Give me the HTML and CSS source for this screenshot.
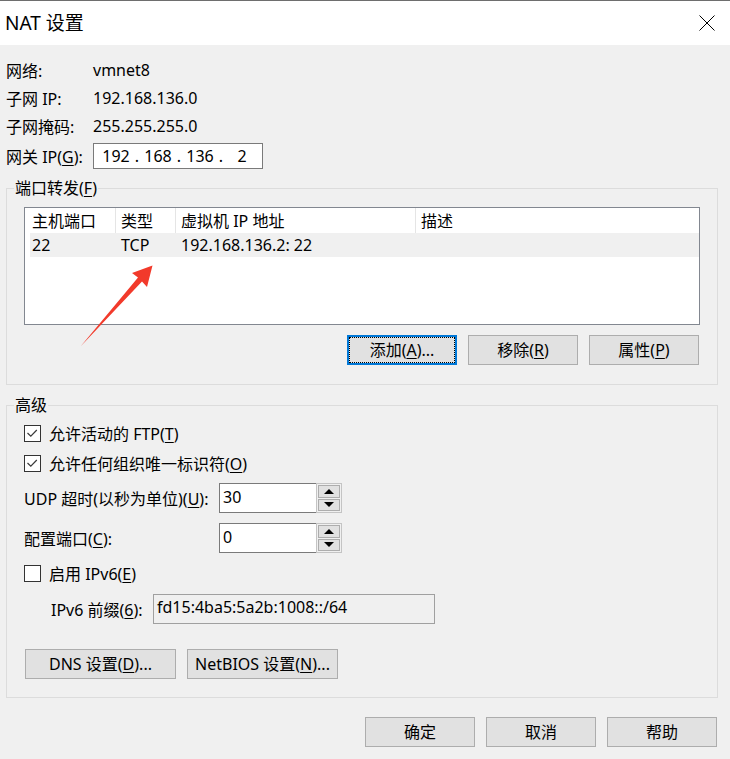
FILE: index.html
```html
<!DOCTYPE html>
<html lang="zh-CN">
<head>
<meta charset="utf-8">
<title>NAT 设置</title>
<link rel="stylesheet" href="styles.css">
</head>
<body>
<div class="window">
  <header class="titlebar">
    <span class="title">NAT 设置</span>
    <span class="close">
      <svg width="16" height="16" viewBox="0 0 16 16"><path d="M0.5 0.5 L15.5 15.5 M15.5 0.5 L0.5 15.5" stroke="#000" stroke-width="1" fill="none"/></svg>
    </span>
  </header>

  <main class="content">
    <div class="info">
      <span>网络:</span><span>vmnet8</span>
      <span>子网 IP:</span><span>192.168.136.0</span>
      <span>子网掩码:</span><span>255.255.255.0</span>
      <span>网关 IP(<u>G</u>):</span>
      <div class="ipbox">
        <span class="seg">192</span><span class="dot">.</span>
        <span class="seg">168</span><span class="dot">.</span>
        <span class="seg">136</span><span class="dot">.</span>
        <span class="seg">2</span>
      </div>
    </div>

    <fieldset class="group">
      <legend>端口转发(<u>F</u>)</legend>
      <div class="group-body ports-body">
        <div class="list">
          <div class="list-head">
            <span class="col">主机端口</span>
            <span class="col sep">类型</span>
            <span class="col sep">虚拟机 IP 地址</span>
            <span class="col sep">描述</span>
          </div>
          <div class="list-row">
            <span class="col first">22</span>
            <span class="col">TCP</span>
            <span class="col">192.168.136.2: 22</span>
            <span class="col"></span>
          </div>
        </div>
        <div class="btnrow">
          <button class="btn default">添加(<u>A</u>)...</button>
          <button class="btn">移除(<u>R</u>)</button>
          <button class="btn">属性(<u>P</u>)</button>
        </div>
      </div>
    </fieldset>

    <fieldset class="group group-adv">
      <legend>高级</legend>
      <div class="group-body adv-body">
        <label class="check">
          <span class="box"><svg width="15" height="15" viewBox="0 0 15 15"><polyline points="2.5,7 5.8,10.2 11.8,4" fill="none" stroke="#3a3a3a" stroke-width="1.2"/></svg></span>
          <span>允许活动的 FTP(<u>T</u>)</span>
        </label>
        <label class="check">
          <span class="box"><svg width="15" height="15" viewBox="0 0 15 15"><polyline points="2.5,7 5.8,10.2 11.8,4" fill="none" stroke="#3a3a3a" stroke-width="1.2"/></svg></span>
          <span>允许任何组织唯一标识符(<u>O</u>)</span>
        </label>

        <div class="field udp">
          <span>UDP 超时(以秒为单位)(<u>U</u>):</span>
          <div class="spin">
            <span class="spin-input">30</span>
            <span class="spin-btns">
              <span class="spin-btn"><span class="tri up"></span></span>
              <span class="spin-btn"><span class="tri down"></span></span>
            </span>
          </div>
        </div>

        <div class="field port">
          <span>配置端口(<u>C</u>):</span>
          <div class="spin">
            <span class="spin-input">0</span>
            <span class="spin-btns">
              <span class="spin-btn"><span class="tri up"></span></span>
              <span class="spin-btn"><span class="tri down"></span></span>
            </span>
          </div>
        </div>

        <label class="check ipv6-check">
          <span class="box"></span>
          <span>启用 IPv6(<u>E</u>)</span>
        </label>

        <div class="prefix">
          <span>IPv6 前缀(<u>6</u>):</span>
          <span class="prefix-input">fd15:4ba5:5a2b:1008::/64</span>
        </div>

        <div class="dnsrow">
          <button class="btn wide">DNS 设置(<u>D</u>)...</button>
          <button class="btn wide">NetBIOS 设置(<u>N</u>)...</button>
        </div>
      </div>
    </fieldset>

    <div class="footer">
      <button class="btn">确定</button>
      <button class="btn">取消</button>
      <button class="btn">帮助</button>
    </div>
  </main>

  <svg class="annot-arrow" width="90" height="95" viewBox="70 258 90 95">
    <polygon points="80.5,346.5 138,277.5 132,273 152.5,265.5 147,287 142,281.5" fill="#f23a2b"/>
  </svg>
</div>
</body>
</html>
```

FILE: styles.css
```css
* { box-sizing: border-box; }

html, body {
  margin: 0;
  padding: 0;
}

body {
  background: #f0f0f0;
  font-family: "Noto Sans", "Noto Sans CJK SC", sans-serif;
  font-size: 16px;
  color: #000;
}

.window {
  position: relative;
  width: 730px;
  height: 759px;
  overflow: hidden;
  background: #f0f0f0;
}

.titlebar {
  height: 45px;
  background: #fff;
  border-top: 1px solid #6e6e6e;
  display: flex;
  align-items: center;
  justify-content: space-between;
  padding: 0 15px 0 5px;
}

.title {
  font-size: 19px;
  line-height: 24px;
  margin-top: -1px;
}

.close {
  display: flex;
  width: 16px;
  height: 16px;
  margin-top: -1px;
}

.content {
  padding-top: 11px;
}

u { text-decoration: underline; text-underline-offset: 2px; }

/* info block */
.info {
  display: grid;
  grid-template-columns: 87px auto;
  grid-template-rows: 28px 28px 28px 32px;
  align-items: center;
  padding-left: 6px;
  justify-content: start;
}

.ipbox {
  width: 170px;
  height: 26px;
  background: #fff;
  border: 1px solid #7a7a7a;
  display: flex;
  align-items: center;
  padding-left: 5px;
}

.seg {
  width: 34px;
  text-align: center;
}

.dot {
  width: 8px;
  text-align: center;
}

/* group boxes */
.group {
  margin: 6px 12px 0 6px;
  padding: 0;
  border: 1px solid #dcdcdc;
  min-width: 0;
}

.group legend {
  margin-left: 7px;
  padding: 0 1px;
  line-height: 20px;
  font-size: 16px;
}

.group-adv {
  margin-top: 10px;
}

.group-body {
  padding: 9px 17px 19px 17px;
}

.adv-body {
  padding: 3px 17px 18px 17px;
}

/* list */
.list {
  height: 118px;
  background: #fff;
  border: 1px solid #828790;
}

.list-head {
  display: grid;
  grid-template-columns: 90px 60px 240px 240px;
  height: 25px;
  align-items: stretch;
}

.list-head .col {
  display: flex;
  align-items: center;
  padding-left: 7px;
  line-height: 20px;
}

.list-head .col.sep {
  border-left: 1px solid #e5e5e5;
  padding-left: 5px;
}

.list-row {
  display: grid;
  grid-template-columns: 85px 60px 240px 240px;
  height: 24px;
  margin-left: 5px;
  background: #f0f0f0;
  align-items: center;
}

.list-row .col {
  padding-left: 6px;
}

.list-row .col.first {
  padding-left: 2px;
}

/* buttons */
.btn {
  width: 110px;
  height: 30px;
  background: #e1e1e1;
  border: 1px solid #adadad;
  font-family: inherit;
  font-size: 16px;
  color: #000;
  padding: 0;
  margin: 0;
  line-height: 20px;
}

.btn.default {
  border: 2px solid #0078d7;
  outline: 1px dotted #000;
  outline-offset: -3px;
}

.btnrow {
  display: flex;
  justify-content: flex-end;
  gap: 11px;
  margin-top: 10px;
  padding-right: 1px;
}

/* checkboxes */
.check {
  display: flex;
  align-items: center;
  height: 30px;
  gap: 8px;
}

.box {
  width: 17px;
  height: 17px;
  border: 1px solid #333;
  background: #fff;
  display: flex;
}

.ipv6-check {
  margin-top: 5px;
}

/* spin fields */
.field {
  display: grid;
  grid-template-columns: 195px auto;
  align-items: center;
  height: 30px;
  justify-content: start;
}

.udp { margin-top: 5px; }
.port { margin-top: 10px; }

.spin {
  display: flex;
  height: 30px;
}

.spin-input {
  width: 97px;
  height: 30px;
  background: #fff;
  border: 1px solid #7a7a7a;
  border-right: none;
  padding: 0 0 3px 3px;
  display: flex;
  align-items: center;
}

.spin-btns {
  width: 26px;
  height: 30px;
  border: 1px solid #c4c4c4;
  padding: 1px;
  display: flex;
  flex-direction: column;
  gap: 1px;
  background: #f0f0f0;
}

.spin-btn {
  flex: 1;
  background: #e1e1e1;
  border: 1px solid #adadad;
  display: flex;
  align-items: center;
  justify-content: center;
}

.tri {
  width: 0;
  height: 0;
  border-left: 5px solid transparent;
  border-right: 5px solid transparent;
}

.tri.up { border-bottom: 5px solid #000; }
.tri.down { border-top: 5px solid #000; }

/* ipv6 prefix */
.prefix {
  display: grid;
  grid-template-columns: 102px 282px;
  align-items: center;
  height: 30px;
  margin-top: 6px;
  padding-left: 27px;
}

.prefix-input {
  height: 30px;
  border: 1px solid #a0a0a0;
  background: #f0f0f0;
  padding: 0 0 4px 3px;
  display: flex;
  align-items: center;
}

.dnsrow {
  display: flex;
  gap: 11px;
  margin-top: 25px;
  padding-left: 1px;
}

.btn.wide {
  width: 151px;
}

/* footer */
.footer {
  display: flex;
  justify-content: flex-end;
  gap: 11px;
  margin-top: 19px;
  padding-right: 13px;
}

/* annotation arrow drawn over the list */
.annot-arrow {
  position: absolute;
  left: 70px;
  top: 258px;
}
```
